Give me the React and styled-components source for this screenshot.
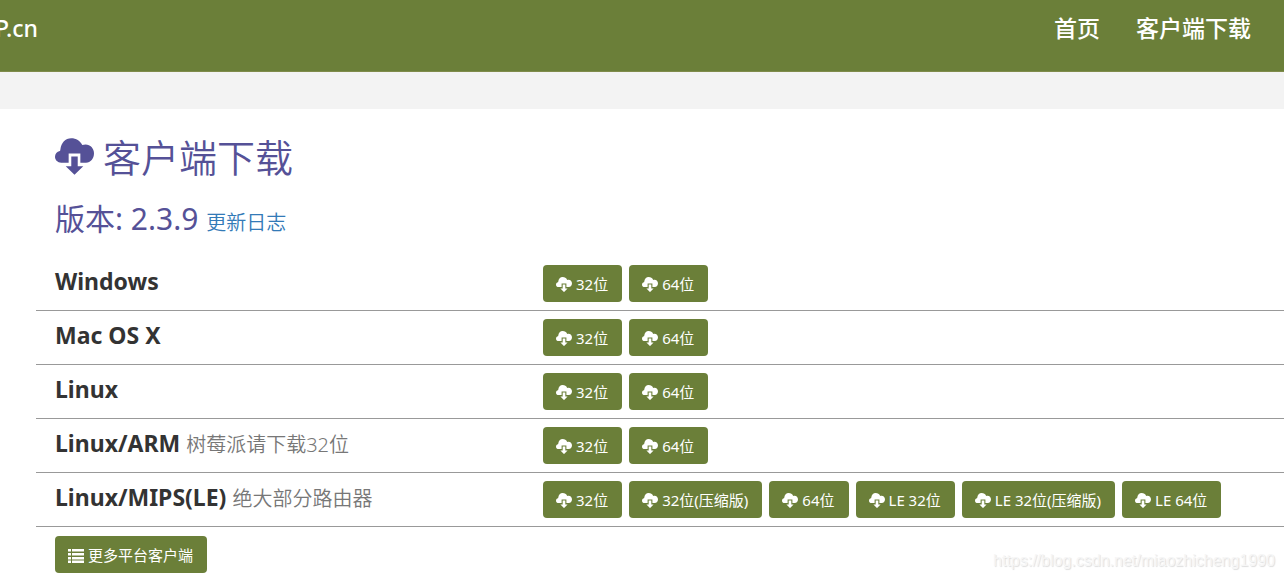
import React from 'react'
import styled, { createGlobalStyle } from 'styled-components'

const systems = [
  { name: 'Windows', files: ['32位', '64位'] },
  { name: 'Mac OS X', files: ['32位', '64位'] },
  { name: 'Linux', files: ['32位', '64位'] },
  { name: 'Linux/ARM', note: '树莓派请下载32位', files: ['32位', '64位'] },
  {
    name: 'Linux/MIPS(LE)',
    note: '绝大部分路由器',
    files: ['32位', '32位(压缩版)', '64位', 'LE 32位', 'LE 32位(压缩版)', 'LE 64位'],
  },
]

function CloudDownload({ size }) {
  return (
    <Icon viewBox="0 0 40 38" $size={size} aria-hidden="true">
      <path d="M14 25.3H6.4C2.7 25.3 0 22.7 0 19.3C0 16.2 2 14 4.9 13.3C5.4 12.9 5.4 12.4 5.5 11.7C6.4 4.9 10.6 .3 16.6 .3C21.7 .3 25.8 2.9 28 7.3C29 6.8 30.2 6.6 31.4 6.6C36.2 6.6 40 10.6 40 15.7C40 21.2 36.5 25.3 31.8 25.3H26V16H14Z" />
      <path d="M16.7 19H23.3V29H29L20 37.7L11 29H16.7Z" />
    </Icon>
  )
}

function ListIcon() {
  return (
    <Icon viewBox="0 0 16 14" $size={16} aria-hidden="true">
      <path d="M0 0h3v2.5H0zM4 0h12v2.5H4zM0 4h3v2.5H0zM4 4h12v2.5H4zM0 8h3v2.5H0zM4 8h12v2.5H4zM0 11.5h3V14H0zM4 11.5h12V14H4z" />
    </Icon>
  )
}

function App() {
  return (
    <>
      <GlobalStyle />
      <Header>
        <Brand href="#">P.cn</Brand>
        <Nav>
          <NavLink href="#">首页</NavLink>
          <NavLink href="#download">客户端下载</NavLink>
        </Nav>
      </Header>
      <Strip />
      <Main id="download">
        <Title>
          <CloudDownload size={39} />
          客户端下载
        </Title>
        <Version>
          版本: 2.3.9 <LogLink href="#log">更新日志</LogLink>
        </Version>

        <List>
          {systems.map((system) => (
            <Row key={system.name}>
              <Name>
                {system.name} {system.note && <Note>{system.note}</Note>}
              </Name>
              <Files>
                {system.files.map((file) => (
                  <Button key={file} type="button">
                    <CloudDownload size={16} />
                    {file}
                  </Button>
                ))}
              </Files>
            </Row>
          ))}
        </List>

        <More>
          <Button type="button">
            <ListIcon />
            更多平台客户端
          </Button>
        </More>
      </Main>
      <Watermark>https://blog.csdn.net/miaozhicheng1990</Watermark>
    </>
  )
}

const GlobalStyle = createGlobalStyle`
    * {
        box-sizing: border-box;
    }

    body {
        margin: 0;
        background: #fff;
        color: #333;
        font-family: 'Noto Sans', 'Noto Sans CJK SC', sans-serif;
        font-size: 15px;
        overflow-x: hidden;
    }
`

const Header = styled.header`
    display: flex;
    justify-content: space-between;
    height: 72px;
    padding: 12px 33px 0 0;
    background: #6b7f39;
    border-bottom: 1px solid #7f8b4b;
`

const Brand = styled.a`
    margin-left: -5px;
    color: #fff;
    font-size: 23px;
    font-weight: 500;
    line-height: 32px;
    text-decoration: none;
`

const Nav = styled.nav`
    display: flex;
    gap: 36px;
`

const NavLink = styled.a`
    color: #fff;
    font-size: 23px;
    font-weight: 500;
    line-height: 32px;
    text-decoration: none;
`

const Strip = styled.div`
    height: 37px;
    background: #f3f3f3;
`

const Main = styled.main`
    padding: 24px 0 6px 36px;
`

const Icon = styled.svg`
    width: ${(props) => props.$size}px;
    flex-shrink: 0;
    fill: currentColor;
`

const Title = styled.h1`
    display: flex;
    align-items: center;
    gap: 9px;
    margin: 0;
    padding-left: 19px;
    color: #555197;
    font-size: 38px;
    font-weight: 350;
    line-height: 48px;
`

const Version = styled.h2`
    margin: 16px 0 12px;
    padding-left: 19px;
    color: #555197;
    font-size: 30px;
    font-weight: 400;
    line-height: 44px;
`

const LogLink = styled.a`
    color: #337ab7;
    font-size: 20px;
    font-weight: 350;
    text-decoration: none;
`

const List = styled.ul`
    margin: 0;
    padding: 0;
    list-style: none;
`

const Row = styled.li`
    display: grid;
    grid-template-columns: 488px 1fr;
    padding: 8px 0 8px 19px;
    border-bottom: 1px solid #999;
`

const Name = styled.h3`
    margin: 0;
    font-size: 23px;
    font-weight: 700;
    line-height: 32px;
`

const Note = styled.small`
    color: #777;
    font-size: 20px;
    font-weight: 350;
`

const Files = styled.div`
    display: flex;
    flex-wrap: wrap;
    gap: 7px;
`

const Button = styled.button`
    display: inline-flex;
    align-items: center;
    gap: 4px;
    height: 37px;
    padding: 0 14px 0 13px;
    border: 0;
    border-radius: 4px;
    background: #6b7f39;
    color: #fff;
    font-family: inherit;
    font-size: 15px;
    cursor: pointer;

    svg {
        margin-top: 2px;
    }
`

const More = styled.div`
    padding: 9px 0 0 19px;
`

const Watermark = styled.span`
    position: absolute;
    right: 9px;
    bottom: 8px;
    color: #f6f6f6;
    font-family: 'Liberation Sans', sans-serif;
    font-size: 16px;
    line-height: 20px;
    text-shadow: 1px 1px 1px #ddd;
`

export default App
